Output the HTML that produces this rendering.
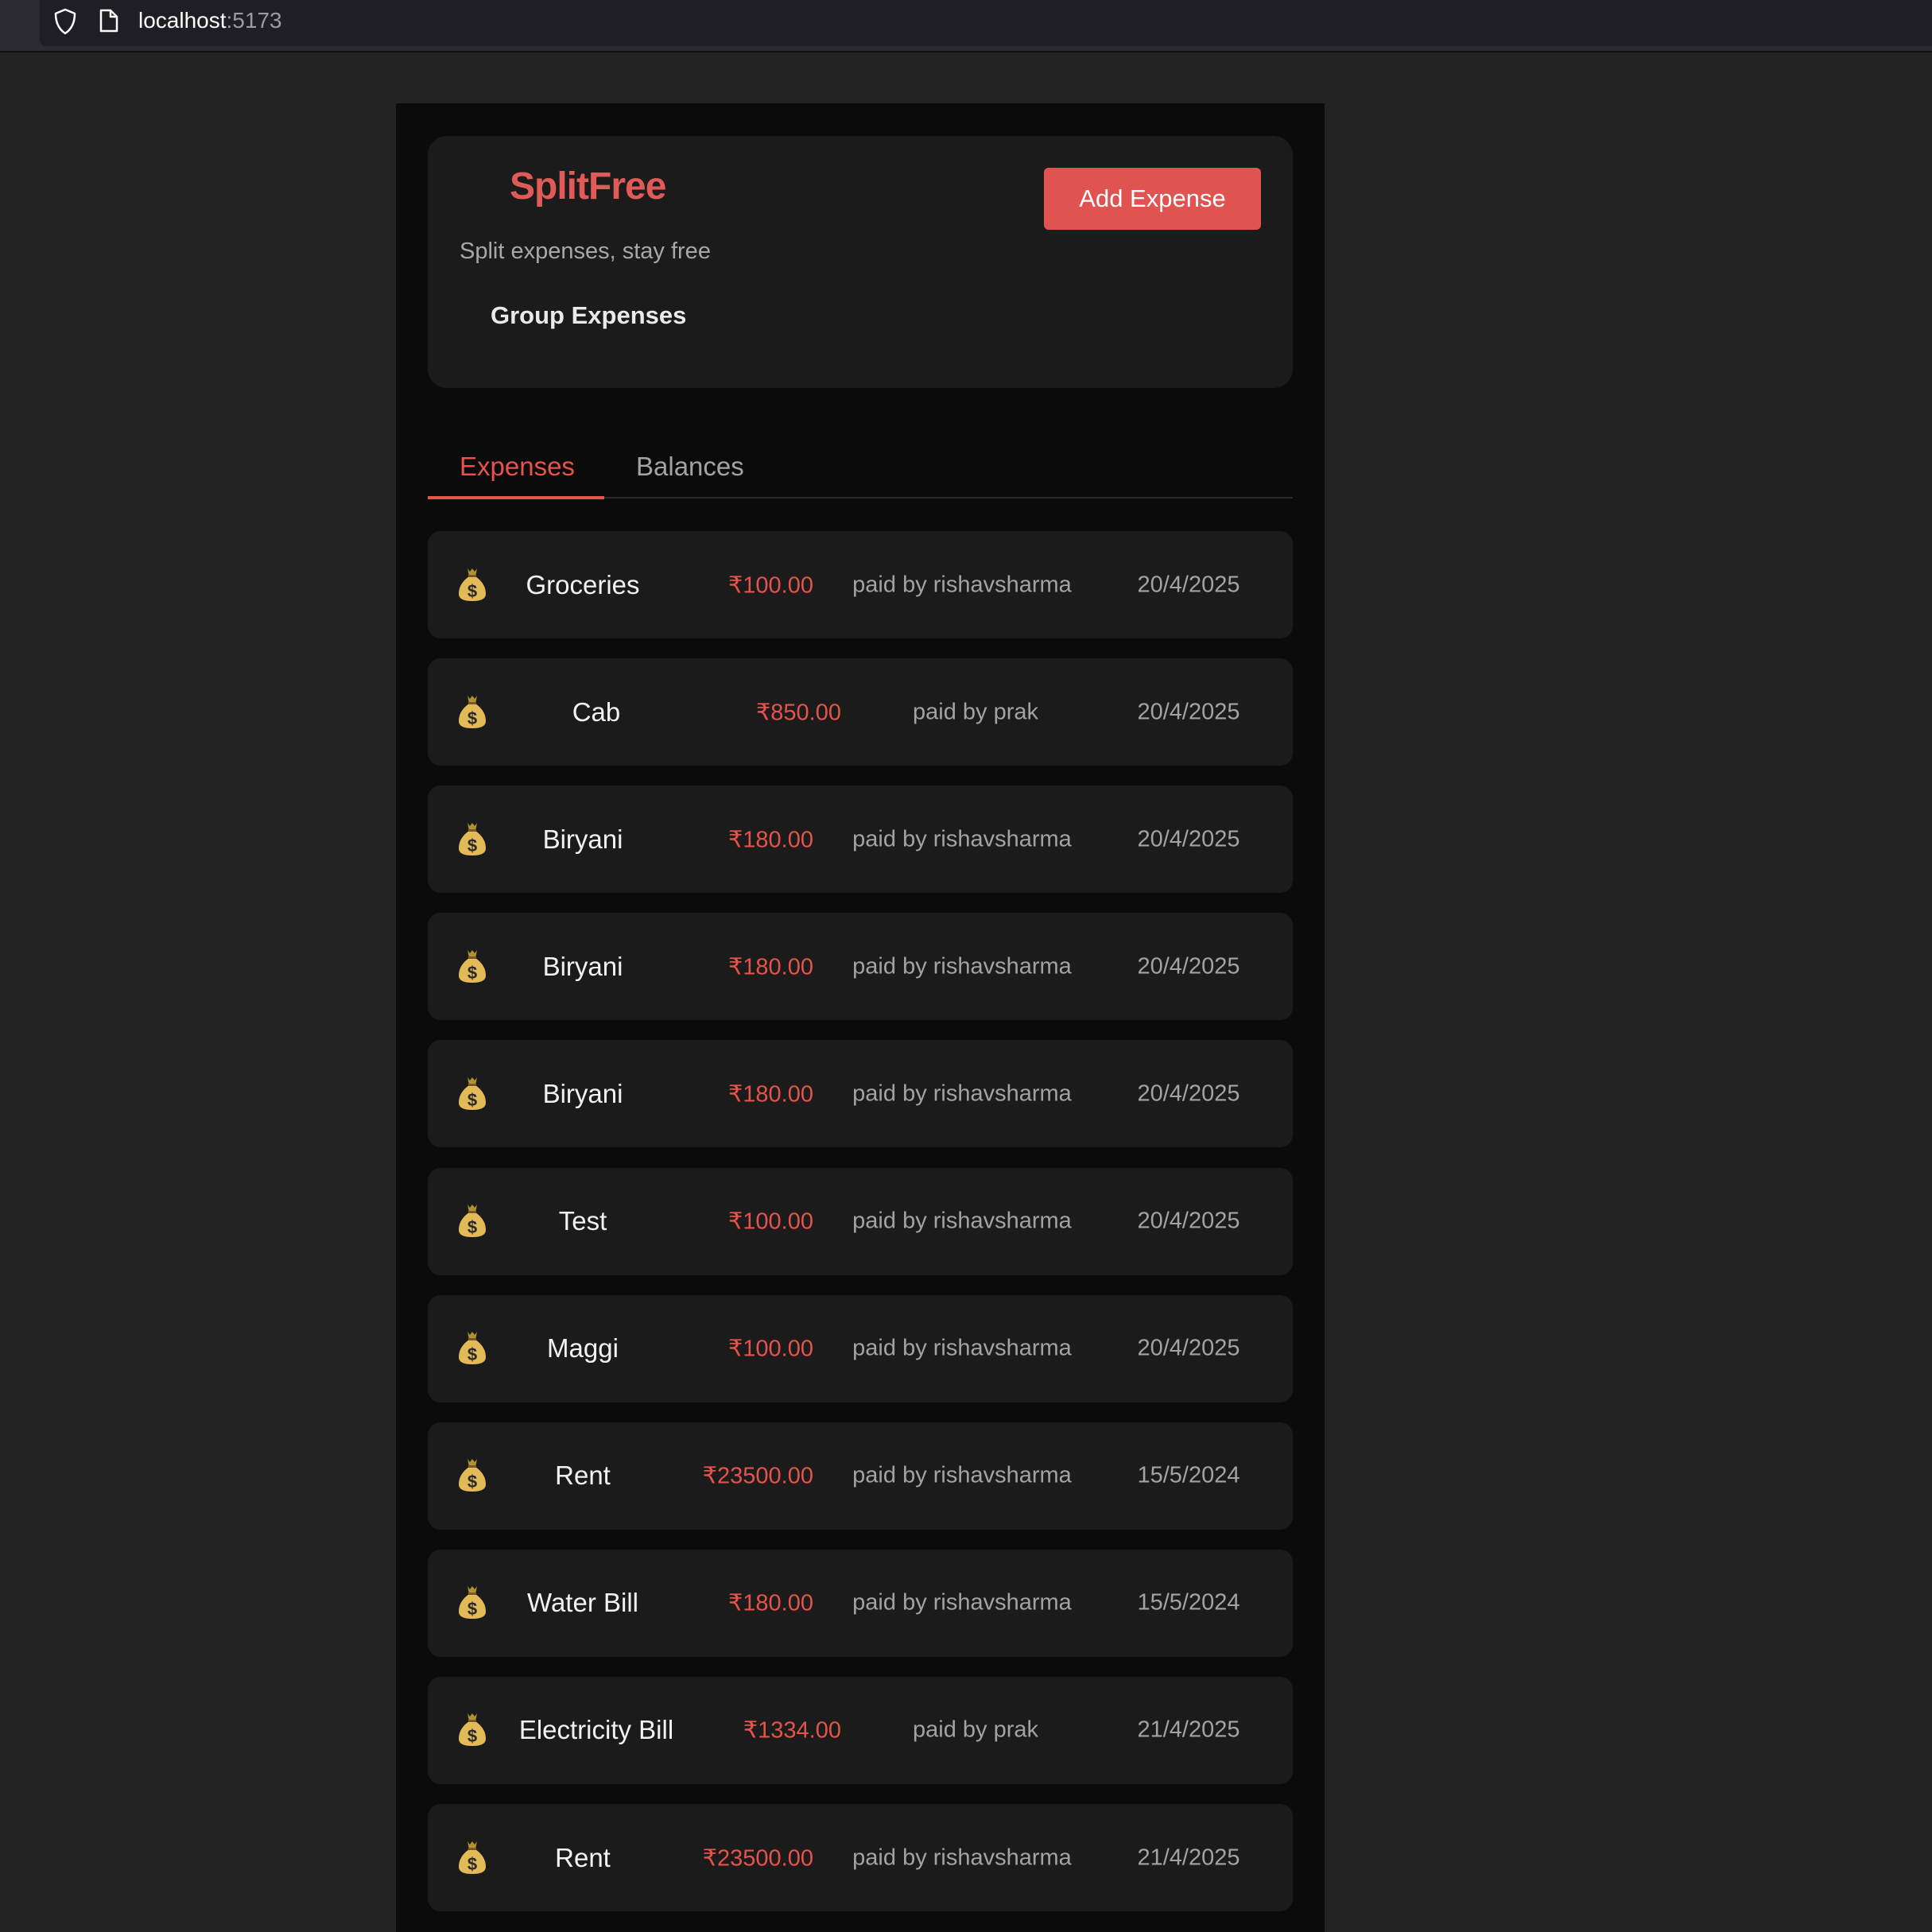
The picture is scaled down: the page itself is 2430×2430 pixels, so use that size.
<!DOCTYPE html>
<html><head><meta charset="utf-8"><style>
*{margin:0;padding:0;box-sizing:border-box}
html,body{width:2430px;height:2358px;overflow:hidden;background:#232323;font-family:"Liberation Sans","DejaVu Sans",sans-serif}
.abs{position:absolute}
#top{position:absolute;left:0;top:0;width:2430px;height:66px;background:#2b2a33;border-bottom:2px solid #111}
#addr{position:absolute;left:50px;top:0;width:2380px;height:58px;background:#1f1e24;border-bottom-left-radius:8px}
#panel{position:absolute;left:498px;top:130px;width:1168px;height:2300px;background:#0b0b0b}
.card{position:absolute;left:538px;width:1088px;background:#1b1b1b;border-radius:16px}
.t{position:absolute;white-space:nowrap;transform:translate(-50%,-50%)}
.name{color:#f2f2f2;font-size:33px}
.amt{color:#e5534b;font-size:29px;position:absolute;white-space:nowrap;transform:translateY(-50%)}
.paid,.date{color:#a3a3a3;font-size:29px}
</style></head><body>
<div id="top"><div id="addr"></div>
<svg class="abs" style="left:66px;top:10px" width="32" height="34" viewBox="0 0 32 34"><path d="M16 2 L28 7 Q28 24 16 32 Q4 24 4 7 Z" fill="none" stroke="#fff" stroke-width="2.5" stroke-linejoin="round"/></svg>
<svg class="abs" style="left:124px;top:11px" width="26" height="30" viewBox="0 0 26 30"><path d="M3 2 H15 L23 10 V28 H3 Z M15 2 V10 H23" fill="none" stroke="#fff" stroke-width="2.5" stroke-linejoin="round"/></svg>
<div class="abs" style="left:174px;top:10px;font-size:28px;color:#fff">localhost<span style="color:#9a9aa0">:5173</span></div>
</div>
<div id="panel"></div>
<div class="card" style="top:171px;height:317px;border-radius:24px"></div>
<div class="abs" style="left:641px;top:207px;font-size:48px;font-weight:bold;color:#e05a57;letter-spacing:-1px">SplitFree</div>
<div class="abs" style="left:578px;top:300px;font-size:29px;color:#a8a8a8">Split expenses, stay free</div>
<div class="abs" style="left:617px;top:379px;font-size:31px;font-weight:bold;color:#eaeaea">Group Expenses</div>
<div class="abs" style="left:1313px;top:211px;width:273px;height:78px;background:#df5350;border-radius:6px;color:#fff;font-size:31px;display:flex;align-items:center;justify-content:center">Add Expense</div>
<div class="abs" style="left:578px;top:568px;font-size:33px;color:#e5534b">Expenses</div>
<div class="abs" style="left:800px;top:568px;font-size:33px;color:#a3a3a3">Balances</div>
<div class="abs" style="left:538px;top:625px;width:1088px;height:2px;background:#2a2a2a"></div>
<div class="abs" style="left:538px;top:624px;width:222px;height:4px;background:#e5534b"></div>

<svg width="0" height="0" style="position:absolute"><defs>
<g id="bag"><path d="M11 1 L14 5 L17 1 L20 5 L23 1 L21 11 L13 11 Z" fill="#b8902e"/><path d="M13 11 Q17 9 21 11 Q34 20 34 33 Q34 42 17 42 Q0 42 0 33 Q0 20 13 11 Z" fill="#e2bb58"/><rect x="12" y="9" width="10" height="3" fill="#7a5a1e"/><text x="17" y="37" font-size="22" font-weight="bold" text-anchor="middle" fill="#2a2a2a" font-family="Liberation Sans,sans-serif">$</text></g>
</defs></svg>

<div id="rows"></div>
<script>
var rows=[["Groceries","₹100.00","rishavsharma","20/4/2025"],["Cab","₹850.00","prak","20/4/2025"],["Biryani","₹180.00","rishavsharma","20/4/2025"],["Biryani","₹180.00","rishavsharma","20/4/2025"],["Biryani","₹180.00","rishavsharma","20/4/2025"],["Test","₹100.00","rishavsharma","20/4/2025"],["Maggi","₹100.00","rishavsharma","20/4/2025"],["Rent","₹23500.00","rishavsharma","15/5/2024"],["Water Bill","₹180.00","rishavsharma","15/5/2024"],["Electricity Bill","₹1334.00","prak","21/4/2025"],["Rent","₹23500.00","rishavsharma","21/4/2025"]];
var h="";
rows.forEach(function(r,i){
 var top=668+i*160.1, c=top+67.5, p=r[2]=="prak";
 var nc=p?750:733, ar=p?1058:1023, pc=p?1227:1210;
 h+='<div class="card" style="top:'+top+'px;height:135px"></div>';
 h+='<svg class="abs" style="left:577px;top:'+(c-22)+'px" width="35" height="43" viewBox="0 0 35 43"><use href="#bag"/></svg>';
 h+='<div class="t name" style="left:'+nc+'px;top:'+c+'px">'+r[0]+'</div>';
 h+='<div class="amt" style="right:'+(2430-ar)+'px;top:'+c+'px">'+r[1]+'</div>';
 h+='<div class="t paid" style="left:'+pc+'px;top:'+c+'px">paid by '+r[2]+'</div>';
 h+='<div class="t date" style="left:1495px;top:'+c+'px">'+r[3]+'</div>';
});
document.getElementById("rows").innerHTML=h;
</script>
</body></html>
